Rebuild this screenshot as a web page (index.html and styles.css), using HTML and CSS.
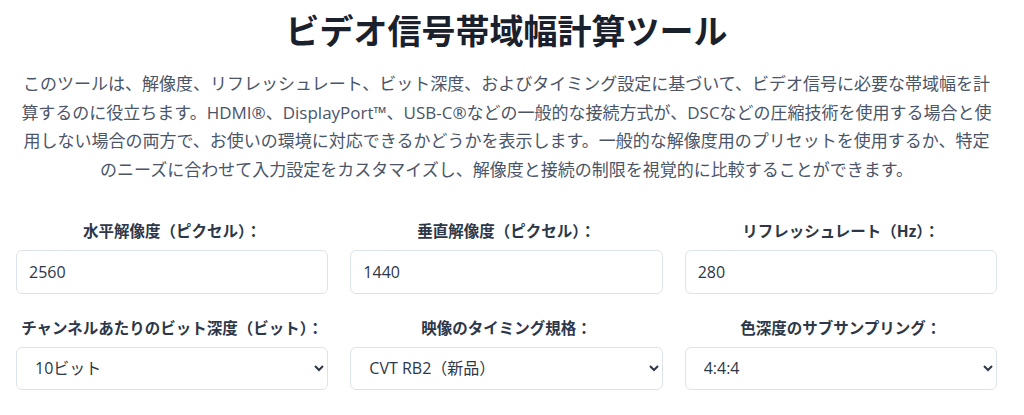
FILE: index.html
```html
<!DOCTYPE html>
<html lang="ja">
<head>
<meta charset="utf-8">
<title>ビデオ信号帯域幅計算ツール</title>
<link rel="stylesheet" href="styles.css">
</head>
<body>
<main class="page">
  <h1 class="title">ビデオ信号帯域幅計算ツール</h1>
  <p class="intro">このツールは、解像度、リフレッシュレート、ビット深度、およびタイミング設定に基づいて、ビデオ信号に必要な帯域幅を計算するのに役立ちます。HDMI®、DisplayPort™、USB-C®などの一般的な接続方式が、DSCなどの圧縮技術を使用する場合と使用しない場合の両方で、お使いの環境に対応できるかどうかを表示します。一般的な解像度用のプリセットを使用するか、特定のニーズに合わせて入力設定をカスタマイズし、解像度と接続の制限を視覚的に比較することができます。</p>
  <form class="grid">
    <div class="field">
      <label class="label" for="h">水平解像度（ピクセル）：</label>
      <input class="control" id="h" type="text" value="2560">
    </div>
    <div class="field">
      <label class="label" for="v">垂直解像度（ピクセル）：</label>
      <input class="control" id="v" type="text" value="1440">
    </div>
    <div class="field">
      <label class="label" for="r">リフレッシュレート（Hz）：</label>
      <input class="control" id="r" type="text" value="280">
    </div>
    <div class="field">
      <label class="label" for="b">チャンネルあたりのビット深度（ビット）：</label>
      <select class="control select" id="b"><option>10ビット</option></select>
    </div>
    <div class="field">
      <label class="label" for="t">映像のタイミング規格：</label>
      <select class="control select" id="t"><option>CVT RB2（新品）</option></select>
    </div>
    <div class="field">
      <label class="label" for="c">色深度のサブサンプリング：</label>
      <select class="control select" id="c"><option>4:4:4</option></select>
    </div>
  </form>
</main>
</body>
</html>
```
FILE: styles.css
```css
html, body {
  margin: 0;
  padding: 0;
  background: #ffffff;
}
body {
  font-family: "Open Sans", "Noto Sans CJK JP", sans-serif;
  color: #4a5568;
}
.page {
  width: 981px;
  margin-left: 16px;
  padding-top: 6px;
}
.title {
  margin: 0;
  text-align: center;
  font-family: "Noto Sans CJK JP", sans-serif;
  font-weight: 700;
  font-size: 34px;
  line-height: 48px;
  color: #1a202c;
}
.intro {
  margin: 16px 0 0;
  text-align: center;
  font-size: 17px;
  line-height: 28.7px;
  color: #4a5568;
}
.grid {
  display: grid;
  grid-template-columns: repeat(3, 1fr);
  column-gap: 22px;
  row-gap: 23px;
  margin-top: 35px;
}
.field {
  display: flex;
  flex-direction: column;
}
.label {
  text-align: center;
  font-weight: 700;
  font-size: 15.5px;
  line-height: 22px;
  color: #2d3748;
  margin-bottom: 8px;
}
.control {
  box-sizing: border-box;
  height: 44px;
  width: 100%;
  border: 1px solid #dde3ea;
  border-radius: 6px;
  padding: 0 12px;
  font-family: "Open Sans", "Noto Sans CJK JP", sans-serif;
  font-size: 16px;
  color: #2d3748;
  background: #ffffff;
}
.select {
  height: 43px;
  padding-left: 14px;
}
```
